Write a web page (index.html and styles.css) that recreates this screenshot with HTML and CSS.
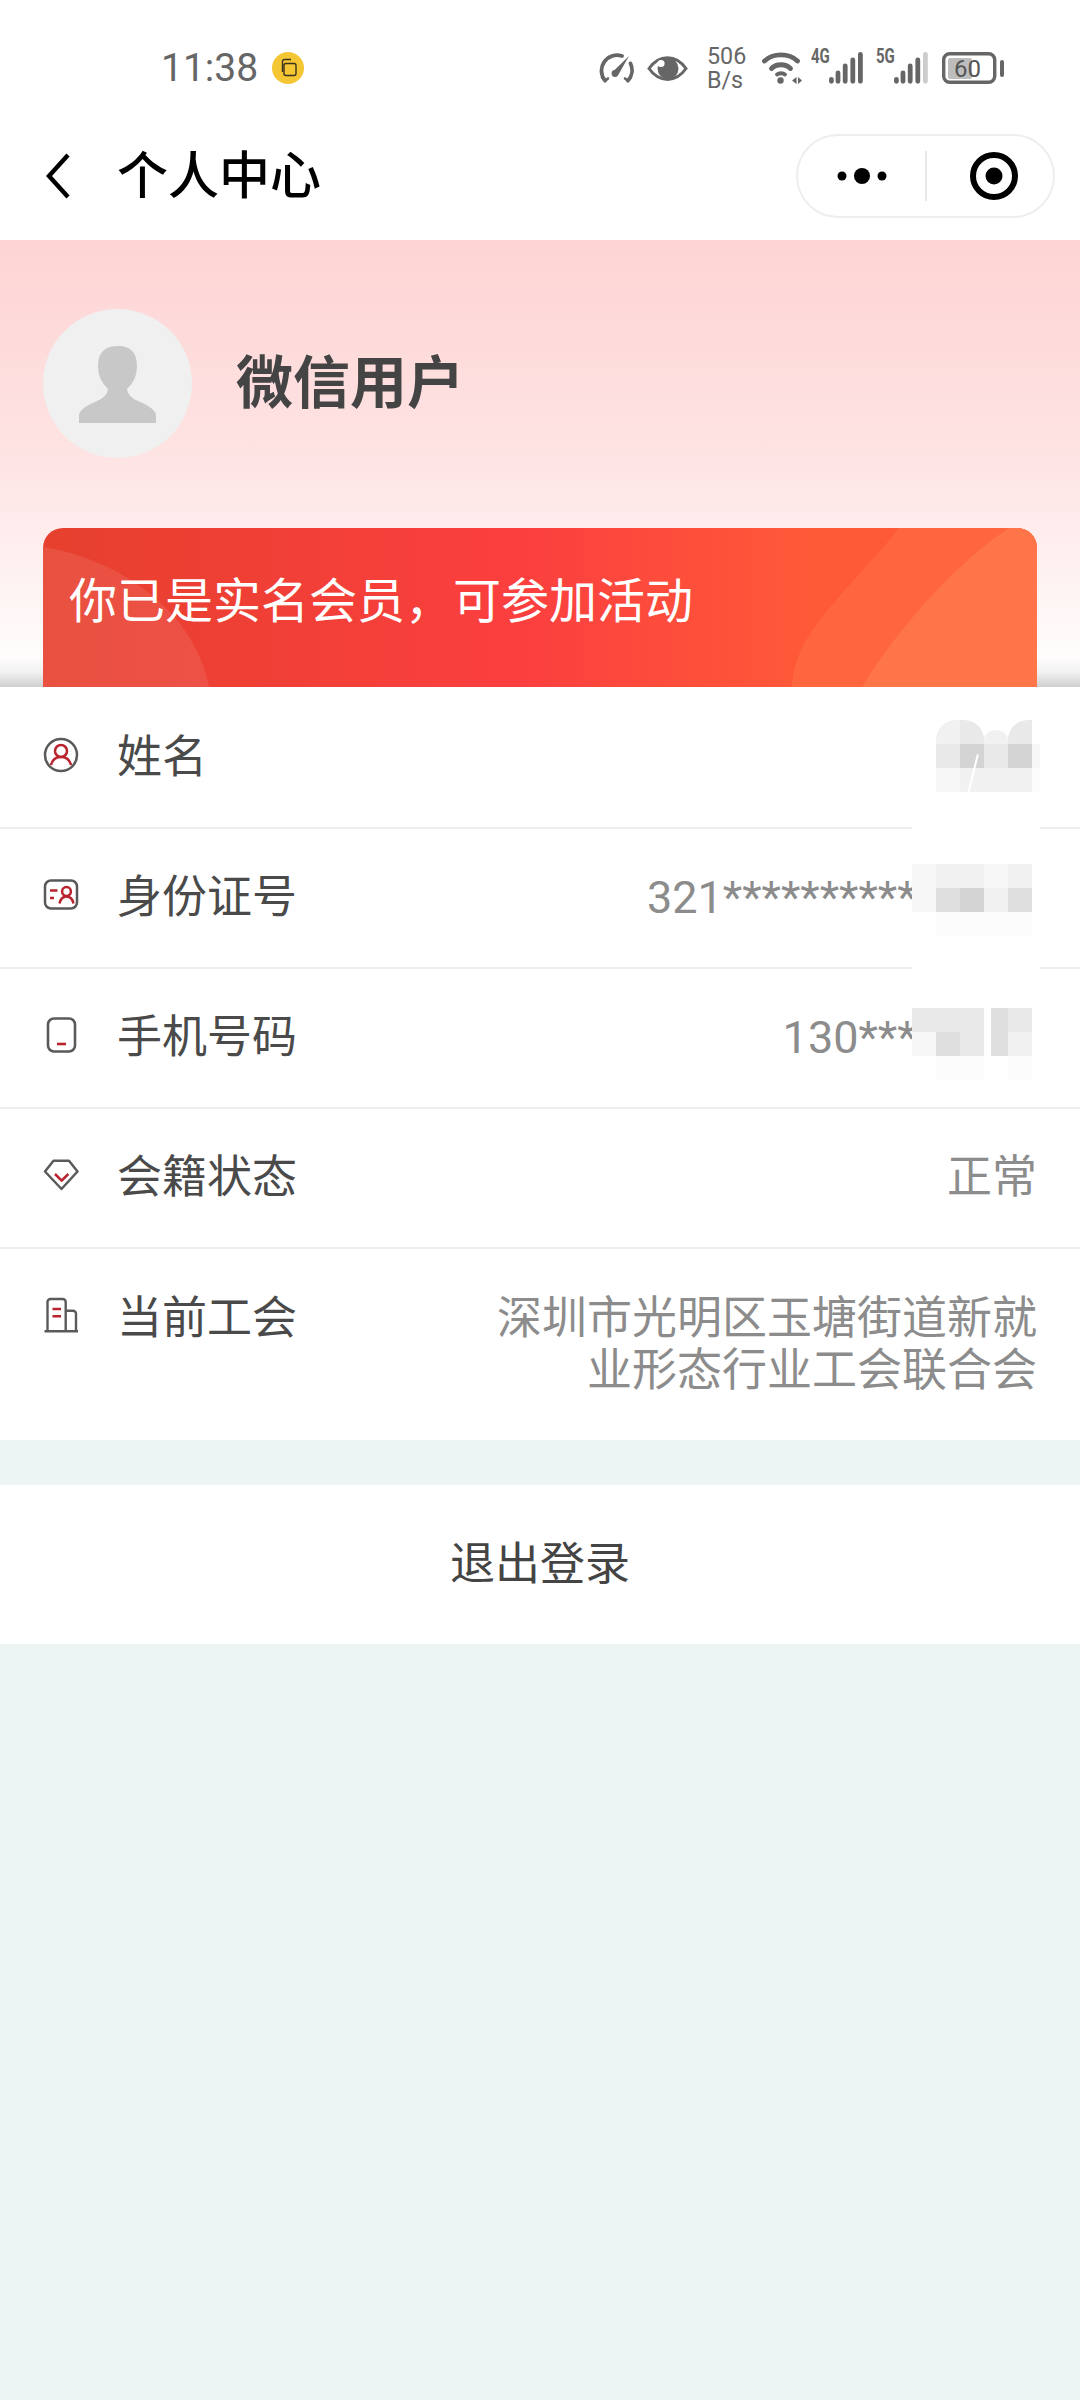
FILE: index.html
```html
<!DOCTYPE html>
<html>
<head>
  <meta charset="UTF-8">
  <title>个人中心</title>
  <link rel="stylesheet" href="styles.css">
</head>
<body>
  <div class="page">
    <div class="status-bar">
      <span class="time">11:38</span>
      <span class="notify-dot">
        <svg width="20" height="20" viewBox="0 0 20 20" fill="none" stroke="#3a3320" stroke-width="1.4">
          <path d="M4.5 14V3.5a2 2 0 0 1 2-2H13"/>
          <rect x="6" y="5.5" width="12" height="12" rx="2"/>
        </svg>
      </span>
      <div class="status-icons">
        <svg class="icon-gauge" width="36" height="30" viewBox="0 0 36 30" fill="none" stroke="#666" stroke-width="3.8" stroke-linecap="round">
          <path d="M6 27.5A15.5 15.5 0 0 1 23 3"/>
          <path d="M31.5 10.5A15.5 15.5 0 0 1 29 27.5"/>
          <path d="M3 24.5l3 3.5 3-2.5M26 25.5l3 2.5 2.5-3" stroke-width="2.6"/>
          <path d="M14 18.5L30 3 19.5 21.5z" fill="#666" stroke="none"/>
          <circle cx="16" cy="20.5" r="3.4" fill="#666" stroke="none"/>
        </svg>
        <svg class="icon-eye" width="41" height="27" viewBox="0 0 41 27">
          <path d="M2 13.5C12 -1 29 -1 39 13.5C29 28 12 28 2 13.5Z" fill="none" stroke="#666" stroke-width="3"/>
          <circle cx="21" cy="13.5" r="10.5" fill="#666"/>
          <circle cx="14" cy="8.5" r="3.6" fill="#fff"/>
        </svg>
        <div class="net-speed">
          <span>506</span>
          <span>B/s</span>
        </div>
        <svg class="icon-wifi" width="40" height="32" viewBox="0 0 40 32" fill="none" stroke="#666" stroke-width="4.8" stroke-linecap="round">
          <path d="M2.5 9C11 .8 27 .8 35.5 9"/>
          <path d="M9.5 16.5C14.5 11.5 23.5 11.5 28.5 16.5"/>
          <path d="M15 22.5C17 20.8 21 20.8 23 22.5" stroke-width="3.8"/>
          <circle cx="18.5" cy="28.5" r="3.2" fill="#666" stroke="none"/>
          <path d="M30 28.5l4.6-3.6v7.2zM36 24.9l4 3.6-4 3.6z" fill="#666" stroke="none"/>
        </svg>
        <span class="net-type">4G</span>
        <svg class="icon-signal" width="34" height="32" viewBox="0 0 34 32" fill="none" stroke="#666" stroke-width="4.8" stroke-linecap="round">
          <path d="M2.4 27.5v1.8M9 21v8.3M16.2 14v15.3M23.8 8v21.3M31.4 2.4v26.9"/>
        </svg>
        <span class="net-type type-second">5G</span>
        <svg class="icon-signal" width="34" height="32" viewBox="0 0 34 32" fill="none" stroke="#666" stroke-width="4.8" stroke-linecap="round">
          <path d="M2.4 27.5v1.8M9 21v8.3M16.2 14v15.3M23.8 8v21.3"/>
          <path d="M31.4 2.4v26.9" stroke="#ccc"/>
        </svg>
        <svg class="icon-battery" width="62" height="32" viewBox="0 0 62 32">
          <rect x="6" y="6" width="24" height="21" rx="2" fill="#bdbdbd"/>
          <rect x="1.7" y="1.7" width="51" height="28.6" rx="6" fill="none" stroke="#666" stroke-width="3.4"/>
          <rect x="58" y="8" width="4" height="17" rx="2" fill="#666"/>
          <text x="25.5" y="25" text-anchor="middle" class="battery-text">60</text>
        </svg>
      </div>
    </div>

    <div class="nav-bar">
      <svg class="nav-back" width="24" height="46" viewBox="0 0 24 46" fill="none" stroke="#000" stroke-width="4.4">
        <path d="M22 2L3 23l19 21"/>
      </svg>
      <h1 class="nav-title">个人中心</h1>
      <div class="capsule">
        <div class="capsule-btn btn-menu">
          <svg width="50" height="20" viewBox="0 0 50 20" fill="#000">
            <circle cx="5" cy="10" r="4.5"/>
            <circle cx="25" cy="10" r="8"/>
            <circle cx="45" cy="10" r="4.5"/>
          </svg>
        </div>
        <div class="capsule-divider"></div>
        <div class="capsule-btn btn-target">
          <svg width="48" height="48" viewBox="0 0 48 48">
            <circle cx="24" cy="24" r="21" fill="none" stroke="#000" stroke-width="6"/>
            <circle cx="24" cy="24" r="8.5" fill="#000"/>
          </svg>
        </div>
      </div>
    </div>

    <div class="hero">
      <div class="profile">
        <div class="avatar">
          <svg width="149" height="149" viewBox="0 0 149 149" fill="#c8c8c8">
            <path d="M36 114V106Q37 99 54 92Q64 88 65 80Q55 71 55 57Q55 37 75 37Q94 37 94 57Q94 71 84 80Q85 88 95 92Q112 99 113 106V114Z"/>
          </svg>
        </div>
        <div class="user-name">微信用户</div>
      </div>
      <div class="member-card">
        <svg class="card-waves" width="994" height="159" viewBox="0 0 994 159">
          <path d="M0 19C70 30 150 78 166 159H0Z" fill="#fff" fill-opacity="0.09"/>
          <path d="M856 0C825 40 775 85 758 122Q749 142 749 159H994V0Z" fill="#ff6640"/>
          <path d="M966 0C920 30 860 92 819 159H994V0Z" fill="#ff754a"/>
        </svg>
        <span class="card-text">你已是实名会员，可参加活动</span>
      </div>
    </div>

    <div class="info-list">
      <div class="info-row">
        <svg class="row-icon" width="36" height="36" viewBox="0 0 36 36" fill="none" stroke-width="2.5">
          <circle cx="18" cy="18" r="16" stroke="#5a5a5a"/>
          <circle cx="18" cy="14" r="6" stroke="#b8232d"/>
          <path d="M8 28Q10 20 18 20Q26 20 28 28" stroke="#b8232d"/>
        </svg>
        <span class="row-label">姓名</span>
      </div>
      <div class="info-row">
        <svg class="row-icon" width="36" height="36" viewBox="0 0 36 36" fill="none" stroke-width="2.5">
          <rect x="2" y="3.5" width="32" height="28" rx="6" stroke="#5a5a5a"/>
          <path d="M7 13.5h7.5M7 21h4" stroke="#b8232d"/>
          <circle cx="23.5" cy="14.5" r="4.4" stroke="#b8232d"/>
          <path d="M16.5 26.5Q18 19.5 23.5 19.5Q29 19.5 30.5 26.5" stroke="#b8232d"/>
        </svg>
        <span class="row-label">身份证号</span>
        <span class="row-value value-masked">321***********</span>
      </div>
      <div class="info-row">
        <svg class="row-icon" width="36" height="36" viewBox="0 0 36 36" fill="none" stroke-width="2.6">
          <rect x="5" y="1.5" width="27" height="33" rx="6" stroke="#5a5a5a"/>
          <path d="M14 27h9" stroke="#b8232d"/>
        </svg>
        <span class="row-label">手机号码</span>
        <span class="row-value value-masked">130****</span>
      </div>
      <div class="info-row">
        <svg class="row-icon" width="36" height="36" viewBox="0 0 36 36" fill="none" stroke-width="2.5" stroke-linejoin="round">
          <path d="M10.5 3.7H26L34.5 14.5L18.5 32L2 14.5Z" stroke="#5a5a5a"/>
          <path d="M12 17l6.7 6.7L25.3 17" stroke="#b8232d"/>
        </svg>
        <span class="row-label">会籍状态</span>
        <span class="row-value">正常</span>
      </div>
      <div class="info-row row-multi">
        <svg class="row-icon" width="36" height="36" viewBox="0 0 36 36" fill="none" stroke-width="2.4">
          <path d="M1.5 34.2H35" stroke="#5a5a5a"/>
          <path d="M4.5 34V5a3 3 0 0 1 3-3H19.7a3 3 0 0 1 3 3V34" stroke="#5a5a5a"/>
          <path d="M22.7 13.7H30a3 3 0 0 1 3 3V34" stroke="#5a5a5a"/>
          <path d="M9.5 12h8.5M9.5 19.3h8.5" stroke="#b8232d"/>
        </svg>
        <span class="row-label">当前工会</span>
        <span class="row-value">深圳市光明区玉塘街道新就业形态行业工会联合会</span>
      </div>
    </div>

    <div class="logout">退出登录</div>

    <div class="mosaic">
      <div class="mosaic-band">
        <i></i><i class="g4 curve-left"></i><i class="g3 curve-right"></i><i class="g4 curve-low"></i><i class="g3 curve-left"></i><i></i>
        <i></i><i class="g3"></i><i class="g1"></i><i class="g3"></i><i class="g1"></i><i class="g5"></i>
        <i></i><i class="g5"></i><i class="g4"></i><i class="g4"></i><i class="g4"></i><i class="g6"></i>
      </div>
      <div class="mosaic-band">
        <i class="g5"></i><i class="g4"></i><i class="g4"></i><i class="g5"></i><i class="g4"></i><i></i>
        <i class="g5"></i><i class="g2"></i><i class="g1"></i><i class="g4"></i><i class="g2"></i><i></i>
        <i></i><i class="g6"></i><i class="g6"></i><i class="g6"></i><i class="g6"></i><i></i>
      </div>
      <div class="mosaic-band">
        <i class="g3"></i><i class="g3"></i><i class="g3"></i><i class="g2 cut"></i><i class="g3"></i><i></i>
        <i class="g5"></i><i class="g2"></i><i class="g3"></i><i class="g2 cut"></i><i class="g4"></i><i></i>
        <i></i><i class="g6"></i><i class="g6"></i><i></i><i class="g6"></i><i></i>
      </div>
      <span class="mosaic-slash"></span>
    </div>
  </div>
</body>
</html>
```

FILE: styles.css
```css
body {
  margin: 0;
  font-family: Roboto, "Noto Sans CJK SC", sans-serif;
  background-color: #edf5f4;
}
.page {
  position: relative;
  width: 1080px;
  height: 2400px;
  overflow: hidden;
}
.status-bar {
  display: flex;
  align-items: center;
  height: 88px;
  padding: 24px 76px 0 161px;
  background-color: #fff;
}
.time {
  font-size: 39px;
  line-height: 40px;
  color: #666;
}
.notify-dot {
  display: flex;
  align-items: center;
  justify-content: center;
  width: 32px;
  height: 32px;
  margin-left: 14px;
  border-radius: 50%;
  background-color: #f5c633;
}
.status-icons {
  display: flex;
  align-items: center;
  margin-left: auto;
  color: #666;
}
.icon-eye {
  margin-left: 12px;
}
.net-speed {
  display: flex;
  flex-direction: column;
  width: 38px;
  margin-left: 19px;
  font-size: 24px;
  line-height: 24px;
  transform: scaleX(0.97);
  transform-origin: left center;
}
.icon-wifi {
  margin-left: 17px;
}
.net-type {
  align-self: flex-start;
  width: 17px;
  margin-left: 9px;
  margin-top: 4px;
  font-size: 20px;
  line-height: 16px;
  font-weight: 700;
  white-space: nowrap;
  transform: scaleX(0.75);
  transform-origin: left center;
}
.type-second {
  margin-left: 13px;
}
.icon-signal {
  margin-left: 1px;
}
.icon-battery {
  margin-left: 14px;
}
.battery-text {
  font-family: Roboto, sans-serif;
  font-size: 24px;
  fill: #555;
}
.nav-bar {
  display: flex;
  align-items: center;
  height: 128px;
  padding: 0 25px 0 46px;
  background-color: #fff;
}
.nav-title {
  margin: 0 0 9px 47px;
  font-size: 51px;
  font-weight: 500;
  color: #000;
}
.capsule {
  display: flex;
  align-items: center;
  box-sizing: border-box;
  width: 259px;
  height: 84px;
  margin-left: auto;
  border: 2px solid #eee;
  border-radius: 42px;
}
.capsule-btn {
  display: flex;
  align-items: center;
  justify-content: center;
  flex: 1;
}
.btn-menu {
  flex: none;
  width: 127px;
}
.btn-target {
  padding-left: 7px;
}
.capsule-divider {
  width: 2px;
  height: 50px;
  background-color: #e8e8e8;
}
.hero {
  box-sizing: border-box;
  height: 447px;
  padding-top: 69px;
  background:
    linear-gradient(to bottom, rgba(190, 190, 190, 0) 0, rgba(190, 190, 190, 0) 417px, rgba(190, 190, 190, 0.2) 432px, rgba(190, 190, 190, 0.75) 447px),
    linear-gradient(to bottom, #fed4d4 0, #fee2e2 45%, #ffefef 70%, #ffffff 97%);
}
.profile {
  display: flex;
  align-items: center;
  gap: 44px;
  padding-left: 43px;
}
.avatar {
  width: 149px;
  height: 149px;
  border-radius: 50%;
  background-color: #f0f0f0;
}
.avatar svg {
  display: block;
}
.user-name {
  margin-bottom: 12px;
  font-size: 57px;
  font-weight: 700;
  color: #444;
}
.member-card {
  position: relative;
  box-sizing: border-box;
  height: 159px;
  margin: 70px 43px 0;
  padding: 50px 0 0 26px;
  border-radius: 20px 20px 0 0;
  overflow: hidden;
  background: linear-gradient(to right, #e6402e 0, #fb3f3f 48%, #ff5a38 78%, #ff5a38 100%);
}
.card-waves {
  position: absolute;
  top: 0;
  left: 0;
}
.card-text {
  position: relative;
  display: block;
  font-size: 48px;
  line-height: 48px;
  color: #fff;
}
.info-list {
  padding-top: 2px;
  background-color: #fff;
}
.info-row {
  display: flex;
  align-items: center;
  padding: 43px 43px;
  border-bottom: 2px solid #eee;
  font-size: 45px;
  line-height: 52px;
}
.row-icon {
  flex-shrink: 0;
  margin-right: 38px;
  margin-bottom: 6px;
}
.row-label {
  flex-shrink: 0;
  color: #4a4a4a;
}
.row-value {
  margin-left: auto;
  color: #8c8c8c;
  text-align: right;
}
.value-masked {
  padding-right: 101px;
  white-space: nowrap;
}
.row-multi {
  align-items: flex-start;
  padding: 44px 43px 43px;
  border-bottom: none;
}
.row-multi .row-icon {
  margin-top: 4px;
  margin-bottom: 0;
}
.row-multi .row-value {
  width: 540px;
}
.logout {
  margin-top: 45px;
  height: 159px;
  font-size: 45px;
  line-height: 159px;
  text-align: center;
  color: #444;
  background-color: #fff;
}
.mosaic {
  position: absolute;
  top: 696px;
  left: 912px;
  display: flex;
  flex-direction: column;
  gap: 72px;
  width: 128px;
  height: 384px;
  box-sizing: border-box;
  padding-top: 24px;
  background-color: #fff;
}
.mosaic-band {
  display: grid;
  grid-template-columns: repeat(5, 24px) 8px;
  grid-auto-rows: 24px;
}
.mosaic-band i {
  display: block;
}
.mosaic-slash {
  position: absolute;
  top: 58px;
  left: 60px;
  width: 2px;
  height: 40px;
  background-color: #fff;
  transform: rotate(14deg);
}
.g1 { background-color: #d4d4d4; }
.g2 { background-color: #dfdfdf; }
.g3 { background-color: #e9e9e9; }
.g4 { background-color: #f1f1f1; }
.g5 { background-color: #f7f7f7; }
.g6 { background-color: #fcfcfc; }
.curve-left {
  border-top-left-radius: 20px;
}
.curve-right {
  border-top-right-radius: 20px;
}
.curve-low {
  border-top-left-radius: 12px 10px;
  border-top-right-radius: 12px 10px;
  margin-top: 10px;
}
.cut {
  box-shadow: inset 7px 0 #fff;
}
```
